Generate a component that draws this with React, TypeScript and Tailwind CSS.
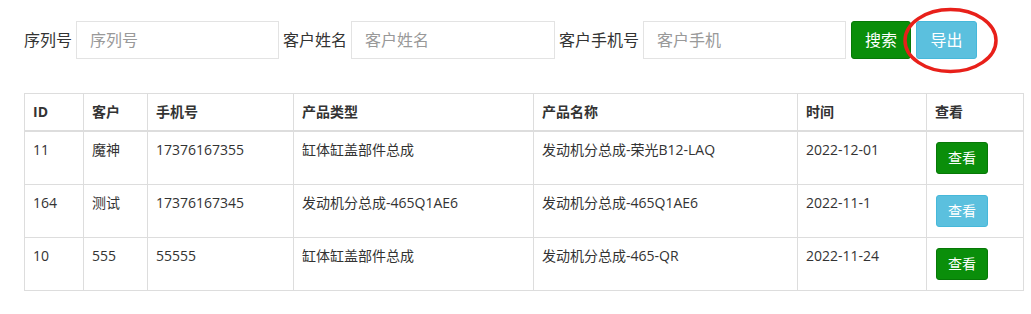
import React from "react";

type Order = {
  id: string;
  customer: string;
  phone: string;
  type: string;
  product: string;
  date: string;
  tone: "green" | "blue";
};

const orders: Order[] = [
  { id: "11", customer: "魔神", phone: "17376167355", type: "缸体缸盖部件总成", product: "发动机分总成-荣光B12-LAQ", date: "2022-12-01", tone: "green" },
  { id: "164", customer: "测试", phone: "17376167345", type: "发动机分总成-465Q1AE6", product: "发动机分总成-465Q1AE6", date: "2022-11-1", tone: "blue" },
  { id: "10", customer: "555", phone: "55555", type: "缸体缸盖部件总成", product: "发动机分总成-465-QR", date: "2022-11-24", tone: "green" },
];

const font = "font-['Open_Sans','Noto_Sans_CJK_SC',sans-serif]";

const Field = ({ label, placeholder, width, gap }: { label: string; placeholder: string; width: string; gap: string }) => (
  <>
    <label className="mr-[4px] text-[16px] text-[#333]">{label}</label>
    <input
      placeholder={placeholder}
      className={`${width} ${gap} h-[38px] border border-[#e3e3e3] bg-white px-[13px] text-[16px] text-[#333] outline-none placeholder:text-[#999]`}
    />
  </>
);

export default function App() {
  return (
    <div className={`${font} relative min-h-[314px] w-[1031px] bg-white px-[24px] pt-[21px]`}>
      {/* search form */}
      <div className="flex items-center">
        <Field label="序列号" placeholder="序列号" width="w-[203px]" gap="mr-[4px]" />
        <Field label="客户姓名" placeholder="客户姓名" width="w-[204px]" gap="mr-[4px]" />
        <Field label="客户手机号" placeholder="客户手机" width="w-[203px]" gap="mr-[5px]" />
        <button className="mr-[5px] h-[38px] w-[60px] rounded-[3px] border border-[#077807] bg-[#0a8e0a] text-[16px] text-white">
          搜索
        </button>
        <button className="relative h-[38px] w-[61px] rounded-[3px] border border-[#46b8da] bg-[#5bc0de] text-[16px] text-white">
          导出
          {/* hand-drawn highlight ring */}
          <svg className="pointer-events-none absolute left-[-14px] top-[-15px]" width="96" height="68" viewBox="0 0 96 68">
            <ellipse cx="47.5" cy="33.5" rx="45.5" ry="31" fill="none" stroke="#e8201a" strokeWidth="3.5" />
          </svg>
        </button>
      </div>

      {/* results table */}
      <table className="mt-[34px] w-[1000px] table-fixed border-collapse text-[14px] text-[#333]">
        <thead>
          <tr className="text-left font-bold">
            <th className="w-[59px] border border-b-2 border-[#ddd] px-2 py-2 leading-5">ID</th>
            <th className="w-[64px] border border-b-2 border-[#ddd] px-2 py-2 leading-5">客户</th>
            <th className="w-[146px] border border-b-2 border-[#ddd] px-2 py-2 leading-5">手机号</th>
            <th className="w-[240px] border border-b-2 border-[#ddd] px-2 py-2 leading-5">产品类型</th>
            <th className="w-[264px] border border-b-2 border-[#ddd] px-2 py-2 leading-5">产品名称</th>
            <th className="w-[129px] border border-b-2 border-[#ddd] px-2 py-2 leading-5">时间</th>
            <th className="border border-b-2 border-[#ddd] px-2 py-2 leading-5">查看</th>
          </tr>
        </thead>
        <tbody>
          {orders.map((o) => (
            <tr key={o.id}>
              <td className="border border-[#ddd] px-2 py-2 align-top leading-5">{o.id}</td>
              <td className="border border-[#ddd] px-2 py-2 align-top leading-5">{o.customer}</td>
              <td className="border border-[#ddd] px-2 py-2 align-top leading-5">{o.phone}</td>
              <td className="border border-[#ddd] px-2 py-2 align-top leading-5">{o.type}</td>
              <td className="border border-[#ddd] px-2 py-2 align-top leading-5">{o.product}</td>
              <td className="border border-[#ddd] px-2 py-2 align-top leading-5">{o.date}</td>
              <td className="border border-[#ddd] px-2 py-2 align-top leading-5">
                <button
                  className={
                    o.tone === "green"
                      ? "my-[2px] ml-[1px] block h-[32px] w-[52px] rounded-[3px] border border-[#077807] bg-[#0a8e0a] text-[14px] text-white"
                      : "my-[2px] ml-[1px] block h-[32px] w-[52px] rounded-[3px] border border-[#46b8da] bg-[#5bc0de] text-[14px] text-white"
                  }
                >
                  查看
                </button>
              </td>
            </tr>
          ))}
        </tbody>
      </table>
    </div>
  );
}
